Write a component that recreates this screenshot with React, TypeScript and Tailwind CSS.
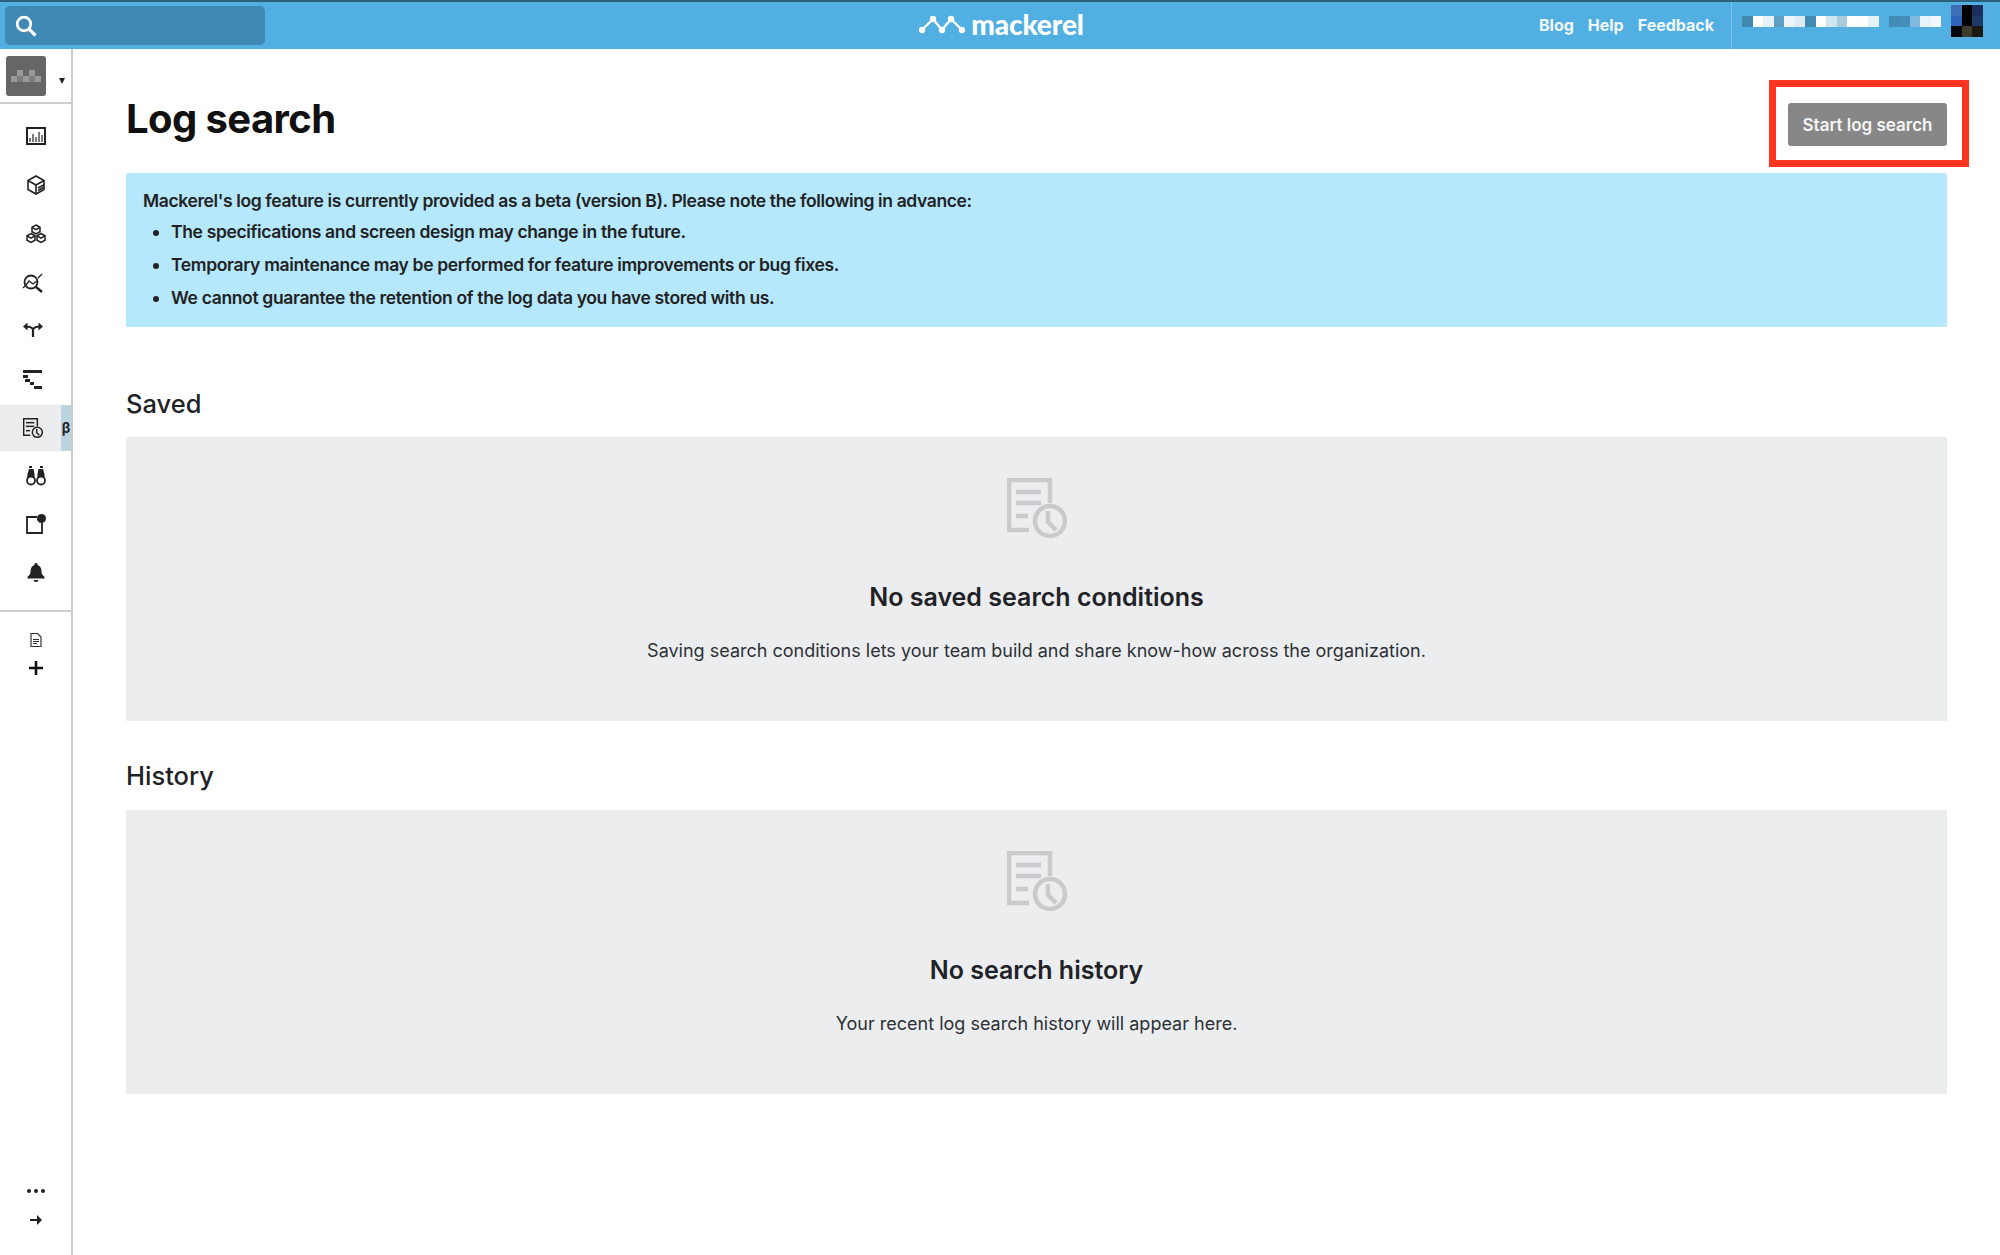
import React from "react";

const F = { fontFamily: "Inter, 'Noto Sans', sans-serif" } as const;

const mosaicA = ["#4189b1","#ffffff","#e6f2f9","#5e9fc4","#ecf4f9","#dcebf4","#418ab3","#ffffff","#cfe6f2","#a9cbdc","#ffffff","#ffffff","#e3f1f9"];
const mosaicB = ["#428db6","#438fb9","#7fbadc","#e8f3f9","#f1f7fb"];
const avatar = ["#3f6fb6","#000000","#1b2f5e","#2f63b8","#000000","#1f3a66","#03060a","#3d3c2e","#1b1a14"];

function Logo() {
  return (
    <svg width="46" height="20" viewBox="0 0 46 20" fill="none" stroke="#fff" strokeWidth="2.400">
      <polyline points="3,16 14,5 23,16 32,5 43,16" />
      <g fill="#fff" stroke="none">
        <circle cx="3" cy="16" r="3.200" /><circle cx="14" cy="5" r="3.200" /><circle cx="23" cy="16" r="3.200" /><circle cx="32" cy="5" r="3.200" /><circle cx="43" cy="16" r="3.200" />
      </g>
    </svg>
  );
}

function LogIcon({ size, color, sw }: { size: number; color: string; sw: number }) {
  return (
    <svg width={size} height={size} viewBox="0 0 60 60" fill="none" stroke={color} strokeWidth={sw}>
      <polyline points="22,52 2,52 2,2 43,2 43,25" />
      <line x1="9" y1="14" x2="34" y2="14" />
      <line x1="9" y1="25" x2="34" y2="25" />
      <line x1="9" y1="38" x2="21" y2="38" />
      <circle cx="43" cy="43" r="15" />
      <polyline points="41,33 41,44 49,52" />
    </svg>
  );
}

const ic = "#222";
const Chart = () => (
  <svg width="20" height="18" viewBox="0 0 20 18" fill="none" stroke={ic}>
    <rect x="1" y="1" width="18" height="16" strokeWidth="2" />
    <path d="M4 15v-4M7 15V7M10 15v-5M13 15V5M16 15V8" strokeWidth="1.200" />
  </svg>
);
const Cube = () => (
  <svg width="18" height="20" viewBox="0 0 18 20" fill="none" stroke={ic} strokeWidth="1.600">
    <path d="M9 1l8 4.500v9L9 19l-8-4.500v-9z" />
    <path d="M1 5.500l8 4.500 8-4.500M9 10v9M11 13l6-3.300M11 15.500l6-3.300" />
  </svg>
);
const Cubes = () => (
  <svg width="20" height="20" viewBox="0 0 20 20" fill="none" stroke={ic} strokeWidth="1.500">
    <path d="M10 1l4 2.300v4.400L10 10 6 7.700V3.300zM5 9.500l4 2.300v4.400L5 18.500l-4-2.300v-4.400zM15 9.500l4 2.300v4.400l-4 2.300-4-2.300v-4.400z" />
    <path d="M6 3.300l4 2.300 4-2.300M1 11.800l4 2.300 4-2.300M11 11.800l4 2.300 4-2.300" />
  </svg>
);
const Scan = () => (
  <svg width="22" height="20" viewBox="0 0 22 20" fill="none" stroke={ic} strokeWidth="1.800">
    <circle cx="9" cy="9" r="6.500" />
    <path d="M14 14l6 5" strokeWidth="2.400" />
    <path d="M1 15l3-3 3-4 4 3 4-3M16 5l4-4" strokeWidth="1.300" />
  </svg>
);
const Fork = () => (
  <svg width="20" height="16" viewBox="0 0 20 16" fill={ic} stroke={ic}>
    <path d="M10 15V7M10 7C8 4.500 6 4.500 3 4.500M10 7c2-2.500 4-2.500 7-2.500" fill="none" strokeWidth="2.200" />
    <path d="M0 4.500L4.500 .5v8zM20 4.500L15.500 .5v8z" stroke="none" />
  </svg>
);
const Trace = () => (
  <svg width="20" height="20" viewBox="0 0 20 20" fill={ic}>
    <rect x="0" y="0" width="19" height="3" />
    <rect x="0" y="5" width="5" height="3" />
    <rect x="2" y="9" width="5" height="3" />
    <rect x="7" y="12" width="4" height="3" />
    <rect x="11" y="16" width="8" height="3" />
  </svg>
);
const Binoculars = () => (
  <svg width="20" height="20" viewBox="0 0 20 20" fill={ic}>
    <path d="M3 0h3v2H3zM14 0h3v2h-3z" />
    <path d="M3 3h4.500l1 5v5H1l.5-5zM12.500 3H17l1.500 5v5H11.500V8z" />
    <circle cx="5" cy="14.500" r="4" fill="#fff" stroke={ic} strokeWidth="1.800" />
    <circle cx="15" cy="14.500" r="4" fill="#fff" stroke={ic} strokeWidth="1.800" />
  </svg>
);
const Note = () => (
  <svg width="20" height="20" viewBox="0 0 20 20" fill="none" stroke={ic} strokeWidth="1.800">
    <polyline points="11,3 1,3 1,19 16,19 16,9" />
    <circle cx="15.500" cy="4.500" r="4.500" fill={ic} stroke="none" />
  </svg>
);
const Bell = () => (
  <svg width="18" height="20" viewBox="0 0 18 20" fill={ic}>
    <path d="M9 0a1.500 1.500 0 0 1 1.500 2C13.500 3 14.500 5.500 14.500 9c0 2 1.500 3.500 3 5v1.500H.5V14c1.500-1.500 3-3 3-5 0-3.500 1-6 4-7A1.500 1.500 0 0 1 9 0z" />
    <path d="M6.500 17h5a2.500 2 0 0 1-5 0z" />
  </svg>
);
const Doc = () => (
  <svg width="12" height="14" viewBox="0 0 12 14" fill="none" stroke="#333" strokeWidth="1.200">
    <path d="M1 .5h6.500L11 4v9.500H1zM3 6.500h6M3 8.500h6M3 10.500h4" />
  </svg>
);
const Plus = () => (
  <svg width="14" height="14" viewBox="0 0 14 14" stroke="#111" strokeWidth="2.600"><path d="M7 0v14M0 7h14" /></svg>
);

function Nav({ children, h = "h-12" }: { children: React.ReactNode; h?: string }) {
  return <div className={`flex ${h} items-center justify-center`}>{children}</div>;
}

function Empty({ title, text }: { title: string; text: string }) {
  return (
    <div className="flex h-[284px] flex-col items-center bg-[#ecedef] pt-[41px]">
      <LogIcon size={60} color="#c8cacc" sw={4.500} />
      <h3 className="mt-[43px] text-[25px] leading-[32px] font-semibold text-[#1f2226]">{title}</h3>
      <p className="mt-[23px] text-[18px] leading-[30px] text-[#2d3136]">{text}</p>
    </div>
  );
}

export default function App() {
  return (
    <div style={F} className="flex h-[1255px] w-[2000px] flex-col overflow-hidden bg-white text-[#1f2226]">
      <header className="flex h-[49px] shrink-0 items-center border-t-2 border-[#2c5f7a] bg-[#52afe2] text-white">
        <div className="flex flex-1 items-center pl-[5px]">
          <div className="flex h-[39px] w-[260px] items-center rounded-[5px] bg-[#3f8ab4] pl-[10px]">
            <svg width="22" height="22" viewBox="0 0 22 22" fill="none" stroke="#fff" strokeWidth="2.800">
              <circle cx="9" cy="9" r="6.800" /><path d="M14 14l6.500 6.500" strokeWidth="3.200" />
            </svg>
          </div>
        </div>
        <div className="mr-[2px] mb-[3px] flex shrink-0 items-center gap-[6px]">
          <Logo />
          <span className="text-[28px] leading-[30px] font-black tracking-[-0.1px] [font-family:Lato,sans-serif]">mackerel</span>
        </div>
        <div className="flex h-full flex-1 items-center justify-end">
          <nav className="mb-[2px] flex items-center gap-[14px] pr-[17px] text-[16px] font-bold text-[#f0f8fc]">
            <span>Blog</span><span>Help</span><span>Feedback</span>
          </nav>
          <div className="flex h-full w-[269px] items-start border-l border-[#7cc3ea] pt-[3px] pl-[10px]">
            <div className="mt-[11px] flex h-[11px] items-stretch">
              {mosaicA.map((c, i) => <div key={i} className="w-[10.500px]" style={{ backgroundColor: c }} />)}
            </div>
            <div className="mt-[11px] ml-[10px] flex h-[11px] items-stretch">
              {mosaicB.map((c, i) => <div key={i} className="w-[10.500px]" style={{ backgroundColor: c }} />)}
            </div>
            <div className="ml-[10px] grid h-[32px] w-[32px] grid-cols-3 grid-rows-3">
              {avatar.map((c, i) => <div key={i} style={{ backgroundColor: c }} />)}
            </div>
          </div>
        </div>
      </header>
      <div className="flex min-h-0 flex-1">
        <aside className="flex w-[73px] shrink-0 flex-col border-r-2 border-[#cccccc]">
          <div className="flex h-[55px] shrink-0 items-start border-b-2 border-[#cfcfcf] pt-[7px] pl-[6px]">
            <div className="relative h-[40px] w-[40px] rounded-[3px] bg-[#666666]">
              <div className="absolute top-[14px] left-[5px] grid grid-cols-5 grid-rows-2">
                {[0,1,0,1,0, 1,0,1,0,1].map((v, i) => (
                  <div key={i} className="h-[6px] w-[6px]" style={{ backgroundColor: v ? "#9a9a9a" : i < 5 ? "#666666" : "#7e7e7e" }} />
                ))}
              </div>
            </div>
            <span className="mt-[22px] ml-[13px] h-0 w-0 border-x-[3.500px] border-t-[6px] border-x-transparent border-t-[#222]" />
          </div>
          <div className="flex shrink-0 flex-col pt-[8px]">
            <Nav h="h-[48px]"><Chart /></Nav>
            <Nav h="h-[49px]"><Cube /></Nav>
            <Nav h="h-[49px]"><Cubes /></Nav>
            <Nav h="h-[49px]"><div className="-ml-[6px]"><Scan /></div></Nav>
            <Nav h="h-[46px]"><div className="-ml-[6px]"><Fork /></div></Nav>
            <Nav h="h-[52px]"><div className="-ml-[5px] pt-[2px]"><Trace /></div></Nav>
            <div className="relative flex h-[46px] items-center justify-center bg-[#ecedef] pr-[6px]">
              <LogIcon size={20} color="#222" sw={4.500} />
              <span className="absolute top-0 right-0 flex h-full w-[10px] items-center justify-center bg-[#bcd3e0] pb-[2px] text-[14px] font-bold">β</span>
            </div>
            <Nav h="h-[49px]"><Binoculars /></Nav>
            <Nav h="h-[48px]"><Note /></Nav>
            <Nav h="h-[49px]"><Bell /></Nav>
          </div>
          <div className="mt-[13px] flex flex-col items-center border-t-2 border-[#cfcfcf] pt-[21px]">
            <Doc />
            <div className="mt-[14px]"><Plus /></div>
          </div>
          <div className="mt-auto flex flex-col items-center pb-[30px]">
            <div className="flex gap-[3px]">
              <span className="h-[4px] w-[4px] rounded-full bg-[#222]" />
              <span className="h-[4px] w-[4px] rounded-full bg-[#222]" />
              <span className="h-[4px] w-[4px] rounded-full bg-[#222]" />
            </div>
            <svg className="mt-[22px]" width="12" height="10" viewBox="0 0 12 10" fill="#222"><path d="M0 4h7V0l5 5-5 5V6H0z" /></svg>
          </div>
        </aside>
        <main className="min-w-0 flex-1 pr-[53px] pl-[53px]">
          <div className="relative flex h-[124px] items-start justify-between">
            <h1 className="mt-[46px] text-[40px] leading-[48px] font-bold tracking-[-0.6px] text-[#111]">Log search</h1>
            <button className="mt-[54px] h-[43px] w-[159px] rounded-[3px] bg-[#878787] pt-[2px] text-[17px] font-semibold text-[#f5f5f5]">Start log search</button>
            <div className="absolute top-[31px] -right-[22px] h-[87px] w-[200px] border-[7px] border-[#ff3520]" />
          </div>
          <section className="h-[154px] rounded-[2px] bg-[#b5e8fd] px-[17px] pt-[14px] text-[17.500px] leading-[33px] font-semibold tracking-[-0.350px] text-[#222]">
            <p className="leading-[28px] tracking-[-0.380px]">Mackerel's log feature is currently provided as a beta (version B). Please note the following in advance:</p>
            <ul className="list-disc pl-[28px]">
              <li>The specifications and screen design may change in the future.</li>
              <li>Temporary maintenance may be performed for feature improvements or bug fixes.</li>
              <li>We cannot guarantee the retention of the log data you have stored with us.</li>
            </ul>
          </section>
          <h2 className="mt-[60px] mb-[16px] text-[25.500px] leading-[34px] font-medium">Saved</h2>
          <Empty title="No saved search conditions" text="Saving search conditions lets your team build and share know-how across the organization." />
          <h2 className="mt-[38px] mb-[17px] text-[25.500px] leading-[34px] font-medium">History</h2>
          <Empty title="No search history" text="Your recent log search history will appear here." />
        </main>
      </div>
    </div>
  );
}
